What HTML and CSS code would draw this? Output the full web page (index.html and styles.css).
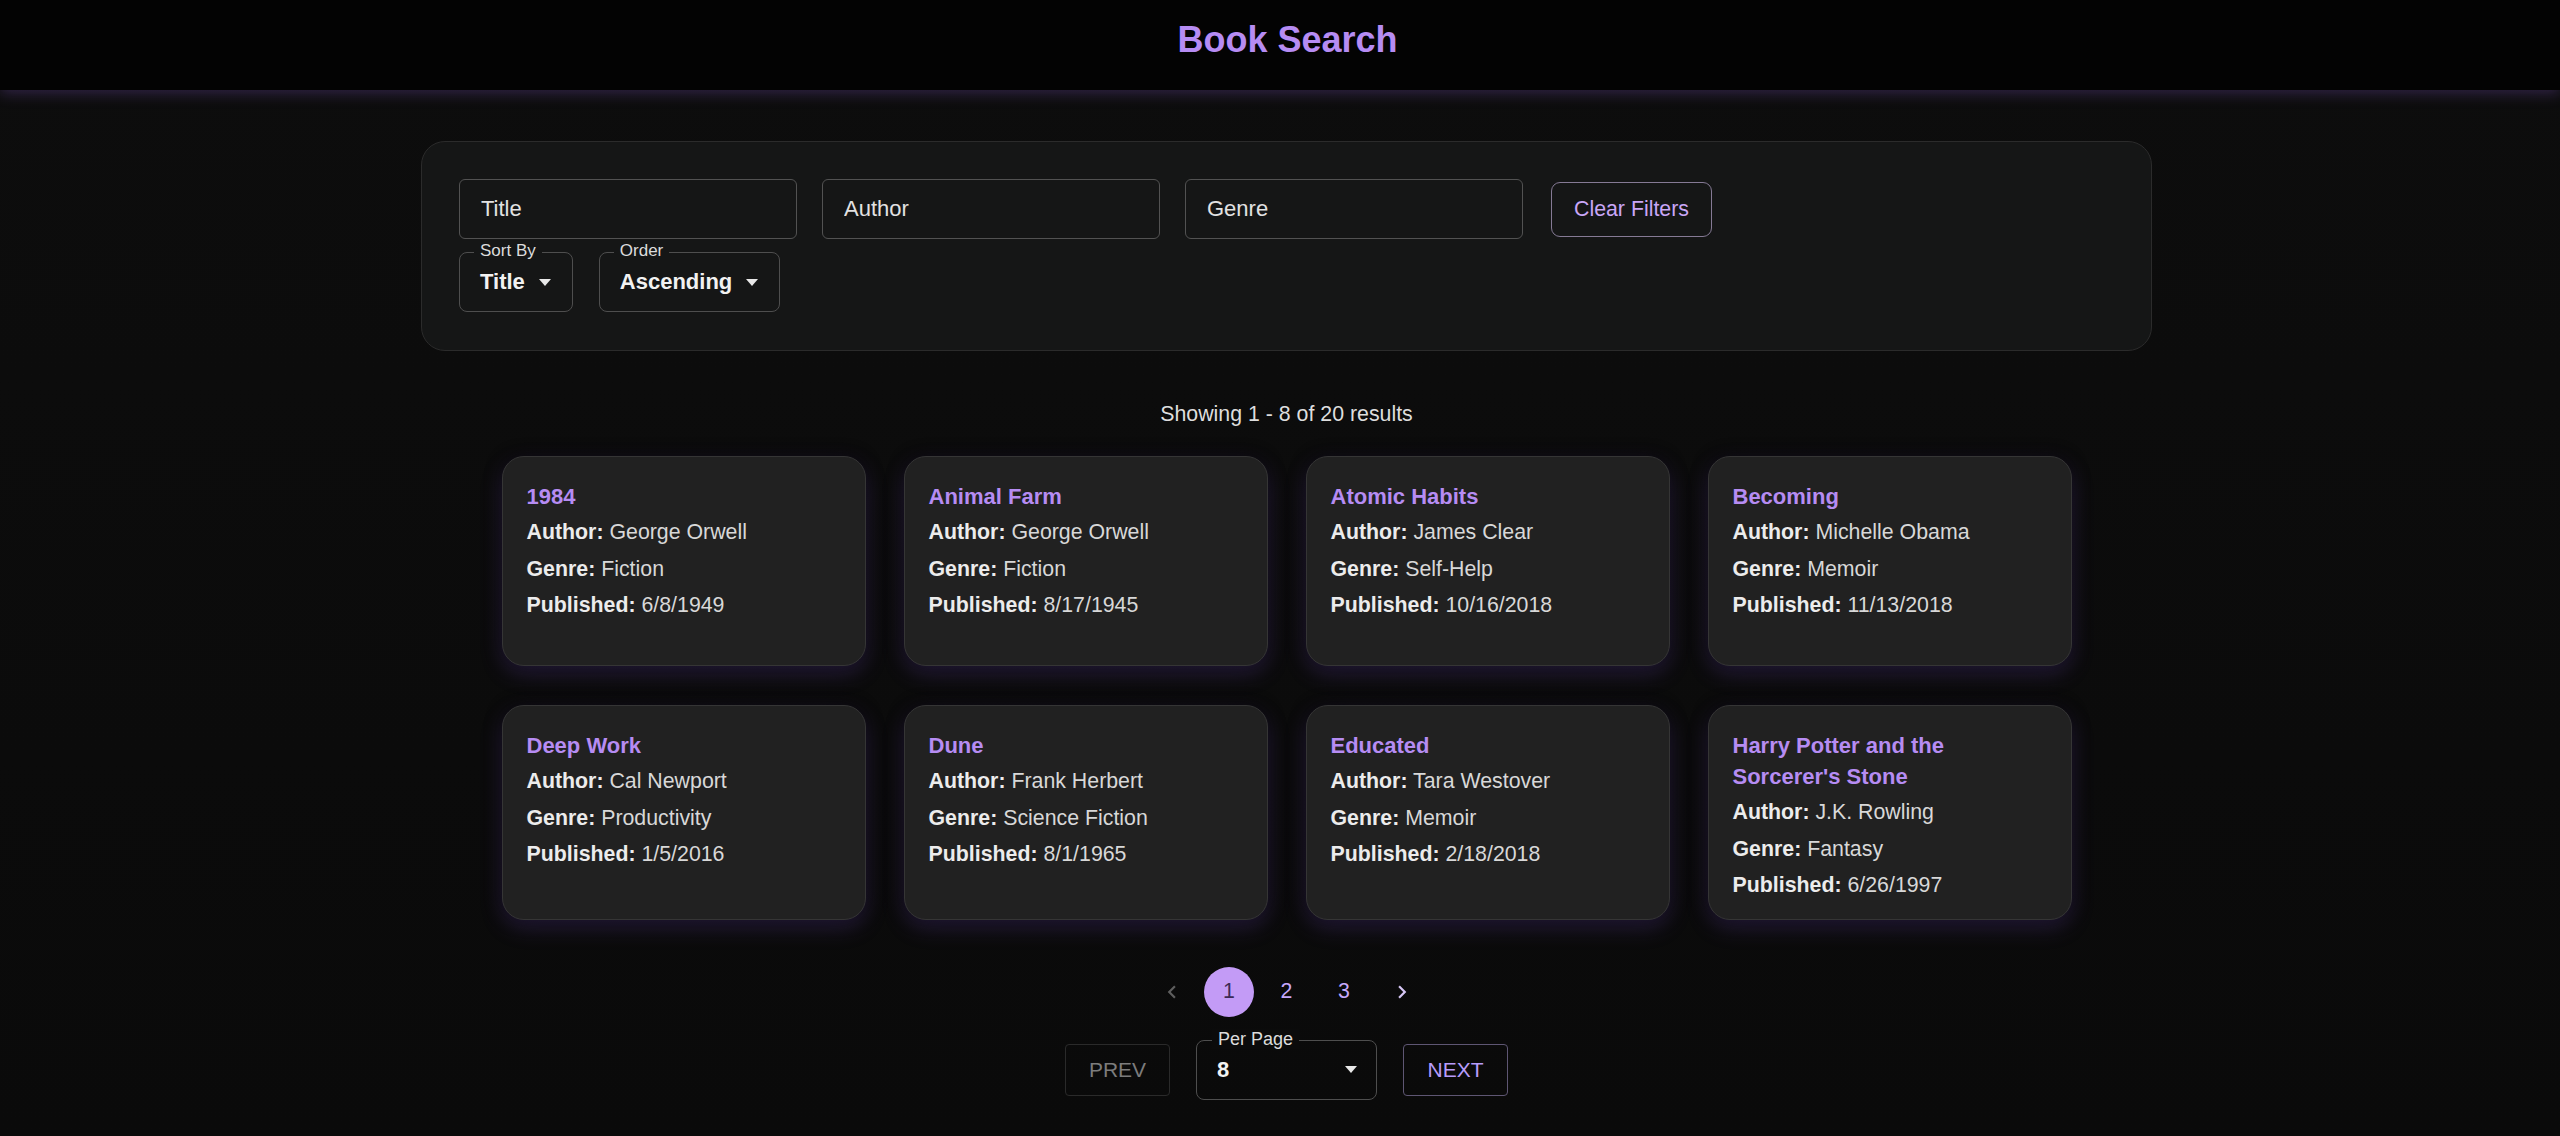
FILE: index.html
```html
<!DOCTYPE html>
<html lang="en">
<head>
<meta charset="utf-8">
<title>Book Search</title>
<link rel="stylesheet" href="styles.css">
</head>
<body>
<header class="topbar">
  <div class="topbar-inner"><h1 class="app-title">Book Search</h1></div>
</header>
<main class="page">
  <section class="filters">
    <div class="filter-row">
      <input class="text-field" type="text" placeholder="Title">
      <input class="text-field" type="text" placeholder="Author">
      <input class="text-field" type="text" placeholder="Genre">
      <button class="clear-btn" type="button">Clear Filters</button>
    </div>
    <div class="filter-row sort-row">
      <div class="select panel-select">
        <span class="select-label">Sort By</span>
        <span class="select-value">Title</span>
        <span class="caret"></span>
      </div>
      <div class="select panel-select">
        <span class="select-label">Order</span>
        <span class="select-value">Ascending</span>
        <span class="caret"></span>
      </div>
    </div>
  </section>

  <p class="result-count">Showing 1 - 8 of 20 results</p>

  <section class="grid">
    <article class="card"><h2 class="card-title">1984</h2><p class="line"><b>Author:</b> George Orwell</p><p class="line"><b>Genre:</b> Fiction</p><p class="line"><b>Published:</b> 6/8/1949</p></article>
    <article class="card"><h2 class="card-title">Animal Farm</h2><p class="line"><b>Author:</b> George Orwell</p><p class="line"><b>Genre:</b> Fiction</p><p class="line"><b>Published:</b> 8/17/1945</p></article>
    <article class="card"><h2 class="card-title">Atomic Habits</h2><p class="line"><b>Author:</b> James Clear</p><p class="line"><b>Genre:</b> Self-Help</p><p class="line"><b>Published:</b> 10/16/2018</p></article>
    <article class="card"><h2 class="card-title">Becoming</h2><p class="line"><b>Author:</b> Michelle Obama</p><p class="line"><b>Genre:</b> Memoir</p><p class="line"><b>Published:</b> 11/13/2018</p></article>
    <article class="card"><h2 class="card-title">Deep Work</h2><p class="line"><b>Author:</b> Cal Newport</p><p class="line"><b>Genre:</b> Productivity</p><p class="line"><b>Published:</b> 1/5/2016</p></article>
    <article class="card"><h2 class="card-title">Dune</h2><p class="line"><b>Author:</b> Frank Herbert</p><p class="line"><b>Genre:</b> Science Fiction</p><p class="line"><b>Published:</b> 8/1/1965</p></article>
    <article class="card"><h2 class="card-title">Educated</h2><p class="line"><b>Author:</b> Tara Westover</p><p class="line"><b>Genre:</b> Memoir</p><p class="line"><b>Published:</b> 2/18/2018</p></article>
    <article class="card"><h2 class="card-title">Harry Potter and the Sorcerer's Stone</h2><p class="line"><b>Author:</b> J.K. Rowling</p><p class="line"><b>Genre:</b> Fantasy</p><p class="line"><b>Published:</b> 6/26/1997</p></article>
  </section>

  <nav class="pager">
    <span class="pg pg-arrow pg-disabled"><svg viewBox="0 0 24 24" width="26" height="26"><path d="M15.41 7.41 14 6l-6 6 6 6 1.41-1.41L10.83 12z" fill="currentColor"/></svg></span>
    <span class="pg pg-current">1</span>
    <span class="pg">2</span>
    <span class="pg">3</span>
    <span class="pg pg-arrow pg-next"><svg viewBox="0 0 24 24" width="26" height="26"><path d="M10 6 8.59 7.41 13.17 12l-4.58 4.59L10 18l6-6z" fill="currentColor"/></svg></span>
  </nav>

  <div class="bottom-row">
    <button class="nav-btn nav-prev" type="button">PREV</button>
    <div class="select page-select">
      <span class="select-label">Per Page</span>
      <span class="select-value">8</span>
      <span class="caret"></span>
    </div>
    <button class="nav-btn nav-next" type="button">NEXT</button>
  </div>
</main>
</body>
</html>
```

FILE: styles.css
```css
* { box-sizing: border-box; }

html, body {
  margin: 0;
  padding: 0;
  background: #0b0b0b;
  color: #e6e6e6;
  font-family: "Liberation Sans", Arial, sans-serif;
}

body {
  min-height: 1136px;
  background: linear-gradient(180deg, #0d0d0d 0%, #0a0a0a 100%);
}

.topbar {
  height: 90px;
  background: #030303;
  box-shadow: 0 3px 14px rgba(150, 100, 230, 0.28);
  position: relative;
  z-index: 1;
}

.topbar-inner {
  padding: 20px 0 0 15px;
  text-align: center;
}

.app-title {
  margin: 0;
  font-size: 36px;
  line-height: 40px;
  font-weight: 700;
  color: #b68cf3;
}

.page {
  padding: 51px 0 0 13px;
  display: flex;
  flex-direction: column;
  align-items: center;
}

.filters {
  width: 1731px;
  height: 210px;
  padding: 37px;
  background: #151616;
  border: 1px solid #2b2b2b;
  border-radius: 24px;
  display: flex;
  flex-direction: column;
  gap: 13px;
}

.filter-row {
  display: flex;
  align-items: center;
  gap: 25px;
}

.sort-row { gap: 26px; }

.text-field {
  width: 338px;
  height: 60px;
  padding: 0 21px;
  background: transparent;
  border: 1px solid #525252;
  border-radius: 6px;
  color: #e8e8e8;
  font-family: "Liberation Sans", Arial, sans-serif;
  font-size: 22px;
  outline: none;
}

.text-field::placeholder { color: #e2e2e2; opacity: 1; }

.clear-btn {
  margin-left: 3px;
  height: 55px;
  padding: 0 22px;
  background: transparent;
  border: 1px solid #857a95;
  border-radius: 9px;
  color: #c9a6f7;
  font-family: "Liberation Sans", Arial, sans-serif;
  font-size: 21.33px;
}

.select {
  position: relative;
  height: 60px;
  display: flex;
  align-items: center;
  gap: 14px;
  padding: 0 21px 0 20px;
  border: 1px solid #4e4e4e;
  border-radius: 8px;
}

.select-label {
  position: absolute;
  left: 14px;
  top: -12px;
  padding: 0 6px;
  font-size: 17px;
  line-height: 20px;
  color: #dcdcdc;
  background: #151616;
}

.select-value {
  font-size: 22px;
  font-weight: 700;
  color: #f2f2f2;
}

.caret {
  width: 0;
  height: 0;
  border-left: 6.5px solid transparent;
  border-right: 6.5px solid transparent;
  border-top: 7px solid #e8e8e8;
}

.result-count {
  margin: 51px 0 0;
  font-size: 21.33px;
  line-height: 24px;
  color: #dedede;
}

.grid {
  margin-top: 30px;
  display: grid;
  grid-template-columns: repeat(4, 364px);
  column-gap: 38px;
  row-gap: 39px;
}

.card {
  min-height: 210px;
  padding: 24px 24px 15px;
  background: #212121;
  border: 1px solid #353535;
  border-radius: 22px;
  box-shadow: 0 8px 22px rgba(125, 80, 210, 0.22), 0 0 16px rgba(0, 0, 0, 0.6);
}

.card-title {
  margin: 0 0 2px;
  font-size: 22px;
  line-height: 31px;
  font-weight: 700;
  color: #b68cf3;
}

.line {
  margin: 0;
  font-size: 21.33px;
  line-height: 36.5px;
  color: #d8d8d8;
}

.line b { color: #ececec; font-weight: 700; }

.pager {
  margin-top: 47px;
  display: flex;
  align-items: center;
  gap: 7.5px;
}

.pg {
  width: 50px;
  height: 50px;
  border-radius: 50%;
  display: flex;
  align-items: center;
  justify-content: center;
  font-size: 21.33px;
  color: #c6a8fa;
}

.pg-current {
  background: #c39bf6;
  color: #3c2a55;
}

.pg-disabled { color: #5e5e5e; }
.pg-next { color: #d6c6f5; }

.bottom-row {
  margin-top: 23px;
  display: flex;
  align-items: center;
  gap: 26px;
}

.nav-btn {
  width: 105px;
  height: 52px;
  background: transparent;
  border-radius: 4px;
  font-family: "Liberation Sans", Arial, sans-serif;
  font-size: 21px;
}

.nav-prev {
  border: 1px solid #2a2a2a;
  color: #7c7c7c;
}

.nav-next {
  border: 1px solid #5e5673;
  color: #b79cfb;
}

.page-select {
  width: 181px;
  height: 60px;
  justify-content: space-between;
  padding: 0 19px 0 20px;
}

.page-select .select-label {
  background: #0b0b0b;
  font-size: 18px;
  left: 15px;
}
```
